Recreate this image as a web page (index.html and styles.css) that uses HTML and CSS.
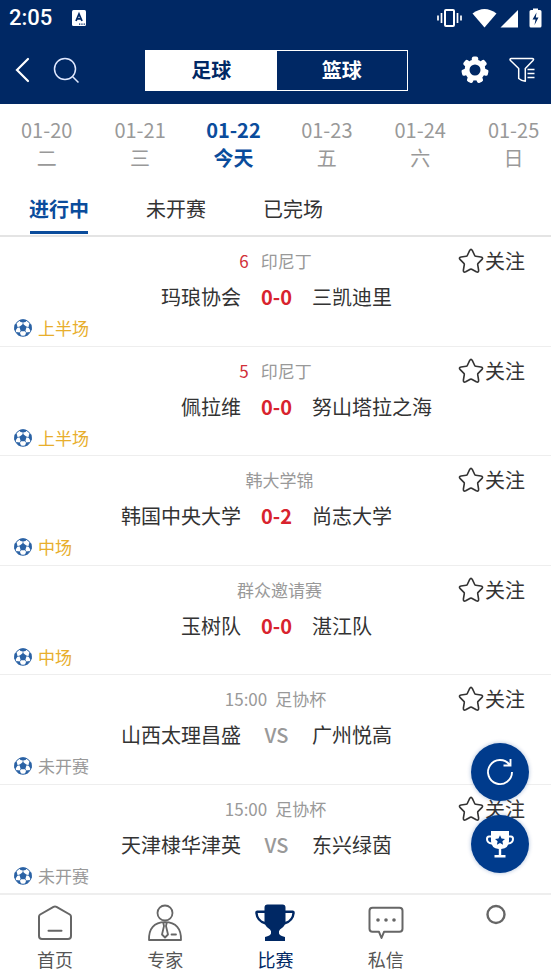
FILE: index.html
```html
<!DOCTYPE html>
<html lang="zh-CN">
<head>
<meta charset="utf-8">
<meta name="viewport" content="width=device-width, initial-scale=1">
<title>比赛</title>
<link rel="stylesheet" href="styles.css">
</head>
<body>
<svg class="sprite" aria-hidden="true">
  <symbol id="star" viewBox="0 0 26 26"><path d="M11.600 2.600Q13 .2 14.400 2.600L16.700 7.500Q17 8.200 17.800 8.300L22.900 9Q25.700 9.600 23.800 11.600L20.100 15.400Q19.600 15.900 19.700 16.600L20.600 22Q20.900 24.900 18.300 23.800L13.700 21.300Q13 20.900 12.300 21.300L7.700 23.800Q5.100 24.900 5.400 22L6.300 16.600Q6.400 15.900 5.900 15.400L2.200 11.600Q.3 9.600 3.100 9L8.200 8.300Q9 8.200 9.300 7.500Z" fill="none" stroke="#333" stroke-width="1.600" stroke-linejoin="round"/></symbol>
  <symbol id="ball" viewBox="0 0 18 18"><circle cx="9" cy="9" r="8.300" fill="#fff" stroke="#2a62a5" stroke-width="1"/><g fill="#2a62a5"><path d="M9 5 12.600 7.700 11.300 12.200H6.700L5.400 7.700Z"/><path d="M5 1.300Q9-.5 13 1.300L11.500 2.900 9 3.600 6.500 2.900Z"/><path d="M.6 5.500 2.800 5 3.600 8.500 1.300 12 .3 10.500Z"/><path d="M17.400 5.500 15.200 5 14.400 8.500 16.700 12 17.700 10.500Z"/><path d="M2.200 13 5.800 13.600 7.200 17.300 4.500 16.500Z"/><path d="M15.800 13 12.200 13.600 10.800 17.300 13.500 16.500Z"/></g><path d="M9 3.400V6M3.200 8.500 6 8M14.800 8.500 12 8M5.600 13.800 7 11.800M12.400 13.800 11 11.800" stroke="#2a62a5" stroke-width=".7" fill="none"/></symbol>
</svg>

<header class="top">
  <div class="status">
    <span class="clock">2:05</span>
    <svg class="keyboard" viewBox="0 0 14 16"><rect width="14" height="16" rx="1.500" fill="#fff"/><path d="M4 11 7 4 10 11M5 8.800H9" fill="none" stroke="#002864" stroke-width="1.800"/><path d="M7 14.200H14" stroke="#002864" stroke-width="1.200" stroke-dasharray="1.300 1"/></svg>
    <svg class="system" viewBox="0 0 106 22"><g fill="none" stroke="#fff" stroke-width="2"><rect x="8" y="3" width="9" height="16" rx="1" /><path d="M4.500 6V16M20.500 6V16M1 8.500V13.500M24 8.500V13.500" stroke-width="1.700"/></g><path d="M35.500 6.500Q47.500-2.500 59.500 6.500L47.500 20.500Z" fill="#fff"/><path d="M63.500 20.500 81 3V20.500Z" fill="#fff"/><path d="M96 1.500H101V3H103Q104.500 3 104.500 4.500V19Q104.500 20.500 103 20.500H94Q92.500 20.500 92.500 19V4.500Q92.500 3 94 3H96Z" fill="#fff"/><path d="M99.500 5.500 95.500 12.500H98.500L97.500 18 101.500 10.500H98.800Z" fill="#002864"/></svg>
  </div>
  <div class="toolbar">
    <div class="tools">
      <button class="icon-btn" aria-label="返回"><svg width="16" height="26" viewBox="0 0 16 26"><path d="M14 2 3 13 14 24" fill="none" stroke="#fff" stroke-width="2.200" stroke-linecap="round"/></svg></button>
      <button class="icon-btn" aria-label="搜索"><svg width="28" height="28" viewBox="0 0 28 28"><g fill="none" stroke="#dfe8ff" stroke-width="1.500"><circle cx="13" cy="13" r="10.500"/><path d="M20.500 20.500 26.500 26.500"/></g></svg></button>
    </div>
    <div class="sports">
      <button class="sport active">足球</button>
      <button class="sport">篮球</button>
    </div>
    <div class="tools end">
      <button class="icon-btn" aria-label="设置"><svg width="28" height="28" viewBox="0 0 28 28"><g fill="#fff"><path d="M14 3.500A10.500 10.500 0 1 0 14 24.500 10.500 10.500 0 1 0 14 3.500ZM14 8.500A5.500 5.500 0 1 1 14 19.500 5.500 5.500 0 1 1 14 8.500Z" fill-rule="evenodd"/><g id="tooth"><rect x="10.800" y=".5" width="6.400" height="5.500" rx="2"/></g><use href="#tooth" transform="rotate(51.400 14 14)"/><use href="#tooth" transform="rotate(102.900 14 14)"/><use href="#tooth" transform="rotate(154.300 14 14)"/><use href="#tooth" transform="rotate(205.700 14 14)"/><use href="#tooth" transform="rotate(257.100 14 14)"/><use href="#tooth" transform="rotate(308.600 14 14)"/></g></svg></button>
      <button class="icon-btn" aria-label="筛选"><svg width="26" height="26" viewBox="0 0 26 26"><path d="M2.500 1.500H23Q25.500 1.700 24 3.500L16.300 11.500V24.200Q12.500 24 9.700 21.500V11.500L1.500 3.500Q.2 1.700 2.500 1.500ZM18.500 12.500H25.500M18.500 16.500H25.500M18.500 20.500H25.500" fill="none" stroke="#fff" stroke-width="1.500" stroke-linejoin="round"/></svg></button>
    </div>
  </div>
</header>

<nav class="dates" aria-label="日期">
  <a href="#" class="date">01-20<span>二</span></a>
  <a href="#" class="date">01-21<span>三</span></a>
  <a href="#" class="date active">01-22<span>今天</span></a>
  <a href="#" class="date">01-23<span>五</span></a>
  <a href="#" class="date">01-24<span>六</span></a>
  <a href="#" class="date">01-25<span>日</span></a>
</nav>

<nav class="tabs" aria-label="状态">
  <a href="#" class="tab active">进行中</a>
  <a href="#" class="tab">未开赛</a>
  <a href="#" class="tab">已完场</a>
</nav>

<main class="matches">
  <article class="match">
    <div class="info"><p class="league"><span class="minute">6</span><span class="name">印尼丁</span></p><button class="follow"><svg><use href="#star"/></svg>关注</button></div>
    <div class="teams"><span class="home">玛琅协会</span><b class="score">0-0</b><span>三凯迪里</span></div>
    <p class="state live"><svg><use href="#ball"/></svg>上半场</p>
  </article>
  <article class="match">
    <div class="info"><p class="league"><span class="minute">5</span><span class="name">印尼丁</span></p><button class="follow"><svg><use href="#star"/></svg>关注</button></div>
    <div class="teams"><span class="home">佩拉维</span><b class="score">0-0</b><span>努山塔拉之海</span></div>
    <p class="state live"><svg><use href="#ball"/></svg>上半场</p>
  </article>
  <article class="match">
    <div class="info"><p class="league"><span class="name">韩大学锦</span></p><button class="follow"><svg><use href="#star"/></svg>关注</button></div>
    <div class="teams"><span class="home">韩国中央大学</span><b class="score">0-2</b><span>尚志大学</span></div>
    <p class="state live"><svg><use href="#ball"/></svg>中场</p>
  </article>
  <article class="match">
    <div class="info"><p class="league"><span class="name">群众邀请赛</span></p><button class="follow"><svg><use href="#star"/></svg>关注</button></div>
    <div class="teams"><span class="home">玉树队</span><b class="score">0-0</b><span>湛江队</span></div>
    <p class="state live"><svg><use href="#ball"/></svg>中场</p>
  </article>
  <article class="match">
    <div class="info"><p class="league"><span>15:00</span><span class="name">足协杯</span></p><button class="follow"><svg><use href="#star"/></svg>关注</button></div>
    <div class="teams"><span class="home">山西太理昌盛</span><b class="score versus">VS</b><span>广州悦高</span></div>
    <p class="state"><svg><use href="#ball"/></svg>未开赛</p>
  </article>
  <article class="match">
    <div class="info"><p class="league"><span>15:00</span><span class="name">足协杯</span></p><button class="follow"><svg><use href="#star"/></svg>关注</button></div>
    <div class="teams"><span class="home">天津棣华津英</span><b class="score versus">VS</b><span>东兴绿茵</span></div>
    <p class="state"><svg><use href="#ball"/></svg>未开赛</p>
  </article>
</main>

<nav class="bottom" aria-label="主导航">
  <a href="#" class="item"><svg viewBox="0 0 38 38"><g fill="none" stroke="#666" stroke-width="2" stroke-linejoin="round" stroke-linecap="round"><path d="M17.500 2.800Q19 2 20.500 2.800L33.800 10.500Q35 11.300 35 12.700V32Q35 35 32 35H6Q3 35 3 32V12.700Q3 11.300 4.200 10.500Z"/><path d="M12.500 26.800H25.500"/></g></svg>首页</a>
  <a href="#" class="item"><svg viewBox="0 0 38 38"><g fill="none" stroke="#666" stroke-width="1.800" stroke-linejoin="round" stroke-linecap="round"><circle cx="19" cy="9" r="7.500"/><path d="M3 36Q2.500 18.500 19 18.200 35.500 18.500 35 36ZM17.200 18.500 18 22 16 30.500 19 33.500 22 30.500 20 22 20.800 18.500M25.500 30.500H30"/></g></svg>专家</a>
  <a href="#" class="item active"><svg class="cup" viewBox="0 0 42 38"><path d="M13.500 .5H28.500Q31.500 .5 31.500 3.500V6.500H39Q41 6.500 40.800 9 40 17.500 31 20.500 29.500 23.500 26 25.500 24.500 27 25 29.500 25.500 31.500 31 33V37H11V33Q16.500 31.500 17 29.500 17.500 27 16 25.500 12.500 23.500 11 20.500 2 17.500 1.200 9 1 6.500 3 6.500H10.500V3.500Q10.500 .5 13.500 .5ZM10.500 9H3.700Q4 15.500 10.500 17.800ZM31.500 9V17.800Q38 15.500 38.300 9Z" fill="#002864" fill-rule="evenodd"/></svg>比赛</a>
  <a href="#" class="item"><svg viewBox="0 0 38 38"><path d="M5.500 3.800H32.500Q35.500 3.800 35.500 6.800V24.800Q35.500 27.800 32.500 27.800H17L14.500 34 12 27.800H5.500Q2.500 27.800 2.500 24.800V6.800Q2.500 3.800 5.500 3.800Z" fill="none" stroke="#666" stroke-width="2" stroke-linejoin="round"/><g fill="#666"><circle cx="11" cy="16" r="1.800"/><circle cx="19" cy="16" r="1.800"/><circle cx="27" cy="16" r="1.800"/></g></svg>私信</a>
  <a href="#" class="item" aria-label="我的"><svg viewBox="0 0 38 38"><circle cx="19" cy="10.500" r="8.500" fill="none" stroke="#666" stroke-width="2.400"/></svg></a>
</nav>

<div class="floating">
  <button class="fab" aria-label="刷新"><svg width="30" height="30" viewBox="0 0 30 30"><path d="M27 15A12 12 0 1 1 24.500 7.700M25.500 2V8.500H18.500" fill="none" stroke="#fff" stroke-width="1.900"/></svg></button>
  <button class="fab" aria-label="排行"><svg width="30" height="30" viewBox="0 0 30 30"><path d="M6 2H24V12Q24 19 16.200 20V26H20.500V28.500H9.500V26H13.800V20Q6 19 6 12Z" fill="#fff"/><path d="M6 7.500H4Q2 7.500 2 10 2 14 7 14.500M24 7.500H26Q28 7.500 28 10 28 14 23 14.500" fill="none" stroke="#fff" stroke-width="2"/><path d="M15 6.200 16.500 9.500 20 9.900 17.400 12.300 18.100 15.800 15 14 11.900 15.800 12.600 12.300 10 9.900 13.500 9.500Z" fill="#003b8c"/></svg></button>
</div>
</body>
</html>
```

FILE: styles.css
```css
* { box-sizing: border-box; }

body {
  margin: 0;
  min-height: 100vh;
  display: flex;
  flex-direction: column;
  background: #fff;
  color: #333;
  font: 20px/28px "Noto Sans CJK SC", sans-serif;
}

p { margin: 0; }
a { color: inherit; text-decoration: none; }
svg { display: block; flex: none; }

button {
  padding: 0;
  border: 0;
  background: none;
  color: inherit;
  font: inherit;
  cursor: pointer;
}

.sprite { position: absolute; width: 0; height: 0; }

.top { background: #002864; color: #fff; }

.status {
  display: flex;
  align-items: center;
  height: 36px;
  padding: 0 8px 0 9px;
}
.clock { font: 500 22px/36px Roboto, sans-serif; }
.keyboard { width: 14px; height: 16px; margin-left: 20px; }
.system { width: 106px; height: 22px; margin-left: auto; }

.toolbar {
  display: grid;
  grid-template-columns: 1fr 263px 1fr;
  align-items: center;
  height: 68px;
  padding: 0 16px;
}
.tools { display: flex; align-items: center; gap: 22px; }
.tools:first-child { margin-left: -2px; }
.tools.end { justify-content: flex-end; gap: 20px; }

.sports { display: flex; margin: 0 -1px 0 1px; border: 1px solid #fff; }
.sport { flex: 1; height: 39px; font-weight: 700; }
.sport.active { background: #fff; color: #002864; }

.dates {
  display: flex;
  height: 80px;
  padding-top: 12px;
  overflow: hidden;
  color: #999;
}
.date { flex: 0 0 calc(100% / 5.9); text-align: center; }
.date span { display: block; }
.date.active { color: #0a4c9c; font-weight: 700; }

.tabs {
  display: flex;
  gap: 57px;
  height: 53px;
  padding: 0 29px;
  border-bottom: 2px solid #e4e4e4;
}
.tab { line-height: 50px; }
.tab.active { color: #0a4c9c; font-weight: 700; }
.tab.active::after {
  content: "";
  display: block;
  height: 3px;
  margin: -3px 1px 0;
  background: #0a4c9c;
}

.matches { flex: 1; display: grid; grid-auto-rows: 1fr; }
.match { padding-top: 12px; border-bottom: 1px solid #eee; }

.info {
  display: grid;
  grid-template-columns: minmax(0, 1fr) auto minmax(0, 1fr);
  align-items: center;
  line-height: 24px;
}
.league { grid-column: 2; display: flex; color: #999; font-size: 17px; }
.minute { padding-right: 4px; color: #d13039; }
.name { margin-left: 8px; }
.follow { display: flex; align-items: center; gap: 1px; justify-self: end; margin-right: 26px; }
.follow svg { width: 26px; height: 26px; margin: -1px 0; }

.teams {
  display: grid;
  grid-template-columns: 1fr 71px 1fr;
  margin-top: 6px;
  padding-left: 2px;
  line-height: 36px;
}
.home { text-align: right; }
.score { color: #d8232e; text-align: center; }
.score.versus { color: #999; font-weight: 500; }

.state {
  display: flex;
  align-items: center;
  gap: 6px;
  padding-left: 14px;
  color: #999;
  font-size: 17px;
  line-height: 26px;
}
.state.live { color: #e8ae2c; }
.state svg { width: 18px; height: 18px; }

.bottom {
  display: grid;
  grid-template-columns: repeat(5, 1fr);
  height: 85px;
  border-top: 1px solid #eee;
  color: #555;
  font-size: 18px;
}
.item { display: flex; flex-direction: column; align-items: center; gap: 3px; padding-top: 9px; }
.item svg { width: 38px; height: 38px; }
.item .cup { width: 42px; }
.item.active { color: #002864; }

.floating {
  position: fixed;
  right: 22px;
  bottom: 106px;
  display: flex;
  flex-direction: column;
  gap: 14px;
}
.fab {
  display: grid;
  place-items: center;
  width: 58px;
  height: 58px;
  border-radius: 50%;
  background: #003b8c;
  box-shadow: 0 0 4px #003b8c55;
}
```
